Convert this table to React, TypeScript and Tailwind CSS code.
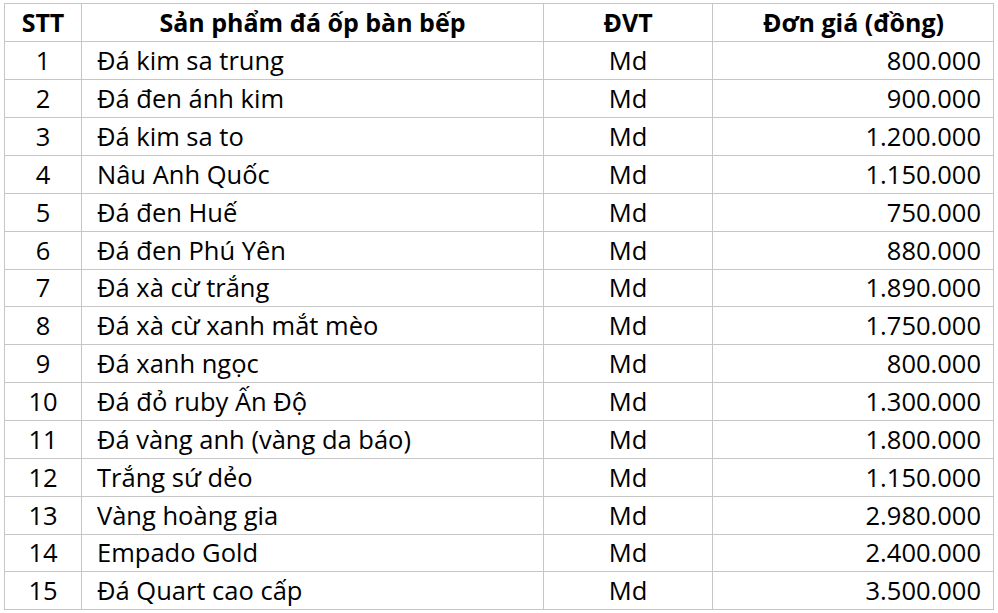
const rows: [string, string][] = [
  ["Đá kim sa trung", "800.000"],
  ["Đá đen ánh kim", "900.000"],
  ["Đá kim sa to", "1.200.000"],
  ["Nâu Anh Quốc", "1.150.000"],
  ["Đá đen Huế", "750.000"],
  ["Đá đen Phú Yên", "880.000"],
  ["Đá xà cừ trắng", "1.890.000"],
  ["Đá xà cừ xanh mắt mèo", "1.750.000"],
  ["Đá xanh ngọc", "800.000"],
  ["Đá đỏ ruby Ấn Độ", "1.300.000"],
  ["Đá vàng anh (vàng da báo)", "1.800.000"],
  ["Trắng sứ dẻo", "1.150.000"],
  ["Vàng hoàng gia", "2.980.000"],
  ["Empado Gold", "2.400.000"],
  ["Đá Quart cao cấp", "3.500.000"],
];

function Row({
  cells,
  bold,
  short,
}: {
  cells: [string, string, string, string];
  bold?: boolean;
  short?: boolean;
}) {
  return (
    <div
      className={`flex border-b border-[#c6c6c6] text-black ${short ? "h-[37px]" : "h-[38px]"} ${bold ? "font-bold text-[25px]" : ""}`}
    >
      <div className="flex w-[77px] shrink-0 items-center justify-center border-r border-[#c6c6c6]">
        {cells[0]}
      </div>
      <div
        className={`flex w-[462px] shrink-0 items-center border-r border-[#c6c6c6] ${bold ? "justify-center" : "pl-[15px]"}`}
      >
        {cells[1]}
      </div>
      <div className="flex w-[169px] shrink-0 items-center justify-center border-r border-[#c6c6c6]">
        {cells[2]}
      </div>
      <div
        className={`flex w-[281px] shrink-0 items-center ${bold ? "justify-center" : "justify-end pr-[13px]"}`}
      >
        {cells[3]}
      </div>
    </div>
  );
}

export default function App() {
  return (
    <div className="h-[613px] w-[998px] bg-white pl-[4px] pt-[3px] font-['Open_Sans','Lato',sans-serif] text-[25.5px] leading-none">
      <div className="w-[990px] border-l border-t border-r border-[#c6c6c6]">
        <Row cells={["STT", "Sản phẩm đá ốp bàn bếp", "ĐVT", "Đơn giá (đồng)"]} bold />
        {rows.map(([name, price], i) => (
          <Row key={name} cells={[String(i + 1), name, "Md", price]} short={i === 6 || i === 13} />
        ))}
      </div>
    </div>
  );
}
